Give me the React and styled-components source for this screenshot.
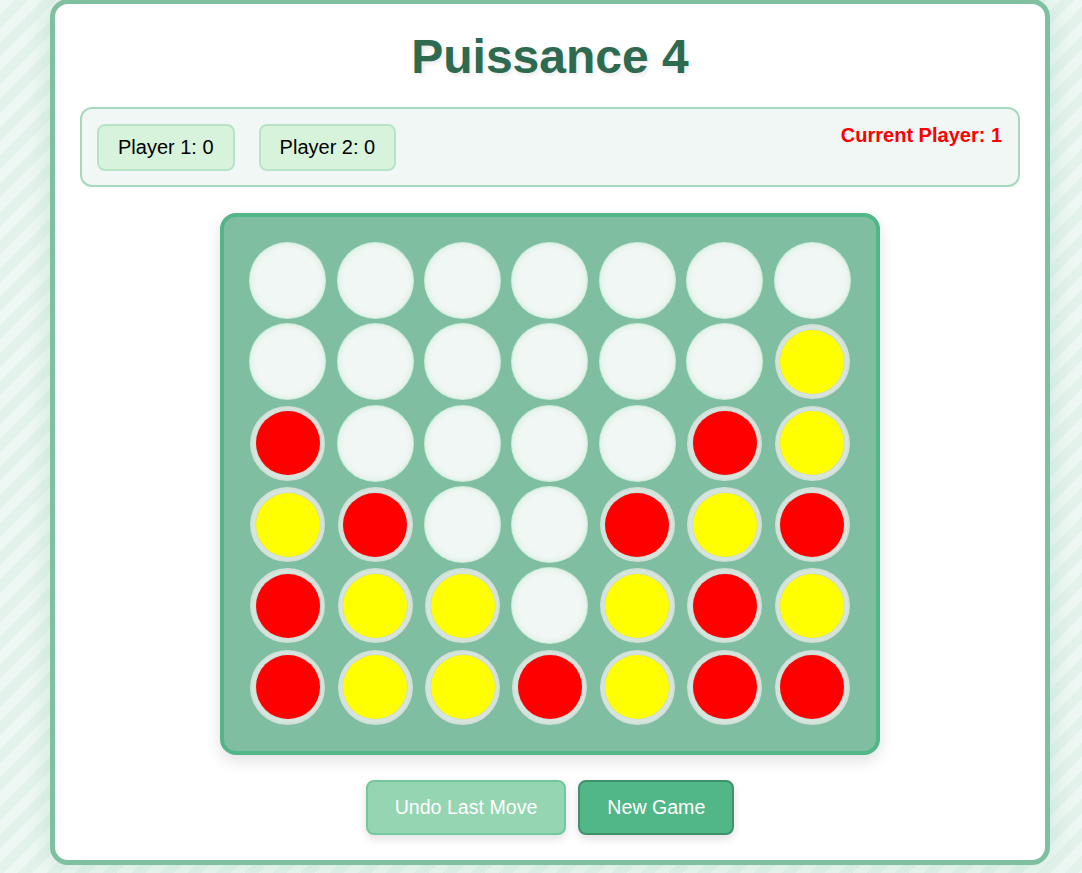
import React from "react";
import styled, { createGlobalStyle } from "styled-components";

const GlobalStyle = createGlobalStyle`
  html, body {
    margin: 0;
    padding: 0;
  }
  body {
    font-family: "Liberation Sans", Arial, sans-serif;
    min-height: 100vh;
    background: repeating-linear-gradient(
      135deg,
      #eef7f3 0px,
      #eef7f3 10px,
      #e4f2ec 10px,
      #e4f2ec 20px
    );
  }
`;

const Page = styled.div`
  display: flex;
  justify-content: center;
  padding-left: 18px;
  min-height: 100vh;
  box-sizing: border-box;
`;

const Container = styled.main`
  width: 1000px;
  box-sizing: border-box;
  align-self: flex-start;
  margin-top: -1px;
  background: #ffffff;
  border: 5px solid #7ec0a0;
  border-radius: 18px;
  padding: 25px;
  box-shadow: 0 0 24px rgba(82, 183, 136, 0.22);
  display: flex;
  flex-direction: column;
  align-items: center;
`;

const Title = styled.h1`
  margin: 0 0 23px;
  font-size: 48px;
  font-weight: bold;
  line-height: 55px;
  color: #2d6a4f;
  text-shadow: 2px 2px 4px rgba(0, 0, 0, 0.1);
`;

const InfoPanel = styled.section`
  align-self: stretch;
  display: flex;
  justify-content: space-between;
  align-items: flex-start;
  background: #f0f7f4;
  border: 2px solid #a6dabf;
  border-radius: 12px;
  padding: 15px;
  height: 80px;
  box-sizing: border-box;
`;

const Scores = styled.div`
  display: flex;
  gap: 24px;
`;

const ScoreBadge = styled.div`
  background: #d8f3dc;
  border: 2px solid #b7e4c7;
  border-radius: 8px;
  padding: 10px 19px;
  font-size: 20px;
  line-height: 23px;
  color: #000;
`;

const CurrentPlayer = styled.div`
  font-size: 20px;
  line-height: 23px;
  font-weight: bold;
  color: ${(p) => (p.$player === 1 ? "#ff0000" : "#c9a800")};
  margin-right: 1px;
`;

const Board = styled.div`
  margin-top: 26px;
  width: 660px;
  box-sizing: border-box;
  background: #7fbea0;
  border: 4px solid #52b788;
  border-radius: 16px;
  padding: 23px 20px;
  display: grid;
  grid-template-columns: repeat(7, 1fr);
  grid-auto-rows: 81.3px;
  box-shadow: 0 6px 16px rgba(0, 0, 0, 0.12);
`;

const Slot = styled.div`
  display: flex;
  align-items: center;
  justify-content: center;
`;

const Cell = styled.div`
  width: 75px;
  height: 75px;
  border-radius: 50%;
  box-sizing: border-box;
  display: flex;
  align-items: center;
  justify-content: center;
  background: ${(p) => (p.$filled ? "#d7e7df" : "#f0f7f4")};
  box-shadow: ${(p) =>
    p.$filled
      ? "inset 0 0 4px rgba(0,0,0,0.08)"
      : "inset 0 0 6px rgba(60,150,100,0.12), 0 0 0 1px #c8eed6"};
`;

const Piece = styled.div`
  width: 64px;
  height: 64px;
  border-radius: 50%;
  background: ${(p) => (p.$color === "R" ? "#ff0000" : "#ffff00")};
  box-shadow: 0 0 2px rgba(0, 0, 0, 0.15);
`;

const Controls = styled.div`
  margin-top: 25px;
  display: flex;
  gap: 12px;
`;

const Button = styled.button`
  font-family: "Liberation Sans", Arial, sans-serif;
  font-size: 19.6px;
  line-height: 23px;
  color: #ffffff;
  border-radius: 8px;
  padding: 14px 27px;
  cursor: pointer;
  background: ${(p) => (p.$variant === "secondary" ? "#95d5b2" : "#52b788")};
  border: 2px solid ${(p) => (p.$variant === "secondary" ? "#74c69d" : "#40916c")};
  box-shadow: 0 4px 10px rgba(0, 0, 0, 0.12);
`;

const grid = [
  "EEEEEEE",
  "EEEEEEY",
  "REEEERY",
  "YREERYR",
  "RYYEYRY",
  "RYYRYRR",
];

export default function App() {
  return (
    <>
      <GlobalStyle />
      <Page>
        <Container>
          <Title>Puissance 4</Title>
          <InfoPanel>
            <Scores>
              <ScoreBadge>Player 1: 0</ScoreBadge>
              <ScoreBadge>Player 2: 0</ScoreBadge>
            </Scores>
            <CurrentPlayer $player={1}>Current Player: 1</CurrentPlayer>
          </InfoPanel>
          <Board>
            {grid.map((row, r) =>
              row.split("").map((c, i) => (
                <Slot key={`${r}-${i}`}>
                  <Cell $filled={c !== "E"}>
                    {c !== "E" && <Piece $color={c} />}
                  </Cell>
                </Slot>
              ))
            )}
          </Board>
          <Controls>
            <Button $variant="secondary">Undo Last Move</Button>
            <Button>New Game</Button>
          </Controls>
        </Container>
      </Page>
    </>
  );
}
